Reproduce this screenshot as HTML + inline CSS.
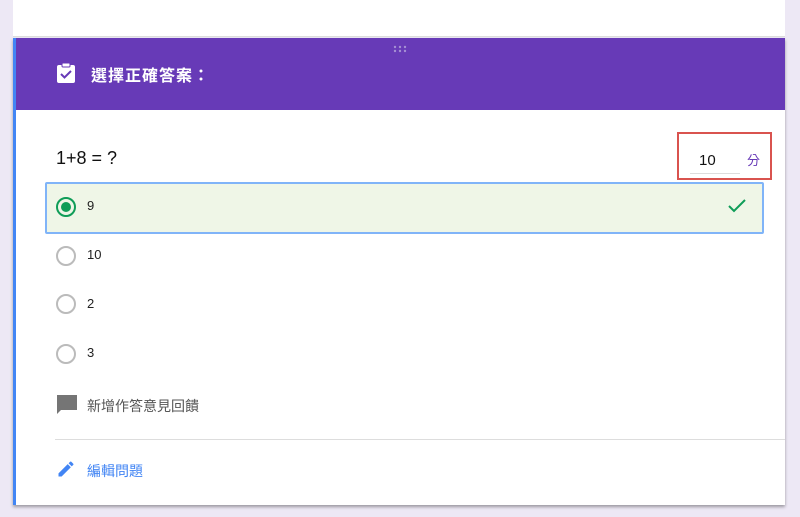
<!DOCTYPE html><html><head><meta charset="utf-8"><style>
body{margin:0;width:800px;height:517px;background:#ede8f5;font-family:"Liberation Sans","Noto Sans CJK TC",sans-serif;position:relative;overflow:hidden}
.a{position:absolute}
.top{left:13px;top:0;width:772px;height:36px;background:#fff;border-bottom:1px solid #ddd}
.card{left:13px;top:38px;width:772px;height:467px;background:#fff;box-shadow:0 2px 3px rgba(0,0,0,.35);border-left:3px solid #4285f4;box-sizing:border-box}
.hdr{left:16px;top:38px;width:769px;height:72px;background:#673ab7}
.radio{width:16px;height:16px;border:2px solid #bbb;border-radius:50%}
.opt{font-size:13px;color:#222}
</style></head><body>
<div class="a top"></div>
<div class="a card"></div>
<div class="a hdr"></div>
<svg class="a" style="left:393px;top:45px" width="14" height="8"><g fill="#a58fd3"><circle cx="2" cy="2" r="1.2"/><circle cx="7" cy="2" r="1.2"/><circle cx="12" cy="2" r="1.2"/><circle cx="2" cy="6" r="1.2"/><circle cx="7" cy="6" r="1.2"/><circle cx="12" cy="6" r="1.2"/></g></svg>
<svg class="a" style="left:56px;top:62px" width="20" height="22" viewBox="0 0 20 22"><rect x="1" y="3" width="18" height="18" rx="2" fill="#fff"/><rect x="6" y="1" width="8" height="4" rx="1" fill="#fff" stroke="#673ab7" stroke-width="1"/><path d="M5 12l3.5 3.5L15 9" stroke="#673ab7" stroke-width="2" fill="none"/></svg>
<div class="a" style="left:91px;top:62px;color:#fff;font-size:16px;font-weight:bold;letter-spacing:1px">選擇正確答案：</div>
<div class="a" style="left:56px;top:148px;font-size:18px;color:#111">1+8 = ?</div>
<div class="a" style="left:677px;top:132px;width:91px;height:44px;border:2px solid #d9534f"></div>
<div class="a" style="left:699px;top:152px;font-size:15px;color:#111">10</div>
<div class="a" style="left:690px;top:173px;width:50px;height:1px;background:#ddd"></div>
<div class="a" style="left:747px;top:150px;font-size:13px;color:#673ab7">分</div>
<div class="a" style="left:45px;top:182px;width:715px;height:48px;border:2px solid #80b4f8;background:#eff6e7;border-radius:2px"></div>
<div class="a radio" style="left:56px;top:197px;border-color:#0f9d58"><div style="margin:3px;width:10px;height:10px;border-radius:50%;background:#0f9d58"></div></div>
<div class="a opt" style="left:87px;top:198px">9</div>
<svg class="a" style="left:727px;top:197px" width="20" height="18"><path d="M2 9l5 5L18 3" stroke="#0f9d58" stroke-width="2" fill="none"/></svg>
<div class="a radio" style="left:56px;top:246px"></div><div class="a opt" style="left:87px;top:247px">10</div>
<div class="a radio" style="left:56px;top:294px"></div><div class="a opt" style="left:87px;top:296px">2</div>
<div class="a radio" style="left:56px;top:344px"></div><div class="a opt" style="left:87px;top:345px">3</div>
<svg class="a" style="left:56px;top:394px" width="22" height="22"><path d="M1 1h20v15H5l-4 4z" fill="#757575"/></svg>
<div class="a" style="left:87px;top:396px;font-size:14px;color:#555">新增作答意見回饋</div>
<div class="a" style="left:55px;top:439px;width:730px;height:1px;background:#ddd"></div>
<svg class="a" style="left:56px;top:459px" width="20" height="20" viewBox="0 0 24 24"><path d="M3 17.25V21h3.75L17.81 9.94l-3.75-3.75L3 17.25zM20.71 7.04a1 1 0 000-1.41l-2.34-2.34a1 1 0 00-1.41 0l-1.83 1.83 3.75 3.75 1.83-1.83z" fill="#4285f4"/></svg>
<div class="a" style="left:87px;top:461px;font-size:14px;color:#4285f4">編輯問題</div>
</body></html>
